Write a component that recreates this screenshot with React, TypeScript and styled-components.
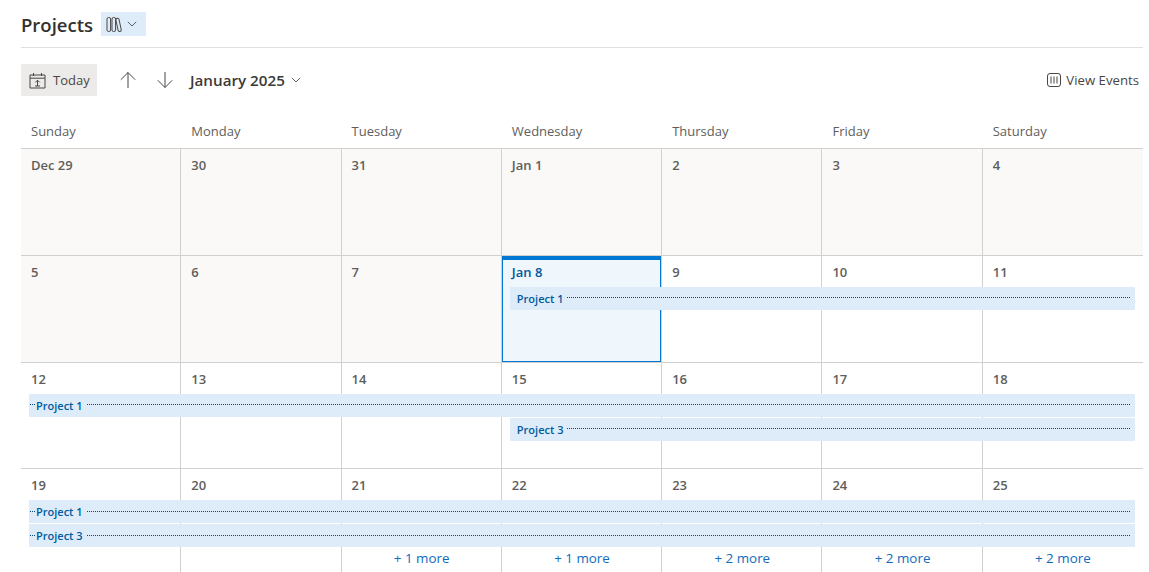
import React from "react";
import styled, { createGlobalStyle } from "styled-components";

const GlobalStyle = createGlobalStyle`
  html, body { margin: 0; padding: 0; background: #fff; overflow: hidden; }
  body { font-family: "Open Sans", "Noto Sans", sans-serif; color: #323130; }
`;

const Page = styled.div`
  width: 1149px;
  height: 572px;
  padding: 0 6px 0 21px;
  box-sizing: border-box;
  overflow: hidden;
`;

const TitleBar = styled.header`
  display: flex;
  align-items: center;
  gap: 8px;
  height: 48px;
  padding-top: 1px;
  box-sizing: border-box;
  border-bottom: 1px solid #e1dfdd;
`;

const Title = styled.h1`
  margin: 1px 0 0;
  font-size: 18.5px;
  font-weight: 600;
  line-height: 24px;
  color: #323130;
`;

const ViewChip = styled.button`
  display: flex;
  align-items: center;
  gap: 4px;
  width: 45px;
  height: 24px;
  padding: 0 0 0 5px;
  box-sizing: border-box;
  border: 0;
  background: #deecf9;
  color: #323130;
`;

const Toolbar = styled.div`
  display: flex;
  align-items: center;
  height: 32px;
  margin-top: 16px;
`;

const TodayButton = styled.button`
  display: flex;
  align-items: center;
  gap: 7px;
  width: 76px;
  height: 32px;
  padding: 0 0 0 8px;
  box-sizing: border-box;
  border: 0;
  background: #edebe9;
  color: #484644;
  font: inherit;
  font-size: 13px;
`;

const ArrowButton = styled.button<{ $gap: number }>`
  display: flex;
  align-items: center;
  justify-content: center;
  width: 20px;
  height: 32px;
  padding: 0;
  margin-left: ${(p) => p.$gap}px;
  border: 0;
  background: none;
  color: #484644;
`;

const MonthLabel = styled.div`
  display: flex;
  align-items: center;
  gap: 6px;
  margin-left: 15px;
  font-size: 15.2px;
  font-weight: 600;
  color: #3b3a39;
`;

const ViewEvents = styled.div`
  display: flex;
  align-items: center;
  gap: 5px;
  margin-left: auto;
  margin-right: 4px;
  font-size: 13.2px;
  color: #484644;
`;

const WeekdayRow = styled.div`
  display: grid;
  grid-template-columns: repeat(7, 1fr);
  height: 49px;
  margin-top: 3px;
  border-bottom: 1px solid #d2d0ce;
  box-sizing: content-box;
`;

const Weekday = styled.div`
  padding: 23px 0 0 10px;
  font-size: 13px;
  line-height: 18px;
  color: #605e5c;
`;

const Week = styled.div<{ $last?: boolean }>`
  display: grid;
  grid-template-columns: repeat(7, 1fr);
  grid-template-rows: 31px 24px 24px 1fr;
  height: ${(p) => (p.$last ? "120px" : "106.8px")};
  box-sizing: border-box;
  border-bottom: ${(p) => (p.$last ? "0" : "1px solid #d2d0ce")};
`;

const DayCell = styled.div<{ $col: number; $past?: boolean; $today?: boolean }>`
  grid-column: ${(p) => p.$col};
  grid-row: 1 / -1;
  box-sizing: border-box;
  padding: 7px 0 0 10px;
  border-right: ${(p) => (p.$col < 7 ? "1px solid #d2d0ce" : "0")};
  background: ${(p) => (p.$past ? "#faf9f8" : "#fff")};
  color: #605e5c;
  font-size: 13px;
  font-weight: 600;
  line-height: 18px;
  ${(p) =>
    p.$today &&
    `
    margin-right: 1px;
    padding: 3px 0 0 9px;
    border: 1px solid #0078d4;
    border-top: 4px solid #0078d4;
    background: #eff6fc;
    color: #005a9e;
    box-shadow: 1px 0 0 #d2d0ce;
  `}
`;

const Bar = styled.div<{ $from: number; $row: number }>`
  grid-column: ${(p) => p.$from} / -1;
  grid-row: ${(p) => p.$row};
  z-index: 1;
  display: flex;
  align-items: center;
  height: 23px;
  margin: 0 8px;
  padding: 0 5px 0 7px;
  background: #deecf9;
  color: #005a9e;
  font-size: 11px;
  font-weight: 600;
  border-radius: 1px;
`;

const Dots = styled.span<{ $lead?: boolean }>`
  flex: ${(p) => (p.$lead ? "0 0 5px" : "1")};
  height: 0;
  margin: ${(p) => (p.$lead ? "-1px 1px 0 -6px" : "-1px 0 0 4px")};
  border-top: 1px dotted #004c87;
`;

const BarName = styled.span`
  white-space: nowrap;
`;

const MoreLink = styled.div<{ $col: number }>`
  grid-column: ${(p) => p.$col};
  grid-row: 4;
  z-index: 1;
  padding-top: 1px;
  text-align: center;
  color: #0f6cbd;
  font-size: 13.4px;
  line-height: 18px;
`;

const Chevron = () => (
  <svg width="10" height="6" viewBox="0 0 10 6" fill="none" stroke="#605e5c" strokeWidth="1">
    <path d="M.8.8 5 5l4.2-4.2" />
  </svg>
);

const BooksIcon = () => (
  <svg width="17" height="17" viewBox="0 0 17 17" fill="none" stroke="#484644" strokeWidth="1">
    <rect x="1" y="1.5" width="3.6" height="14" rx="1.5" />
    <rect x="6" y="1.5" width="3.6" height="14" rx="1.5" />
    <rect x="11" y="2.2" width="3.2" height="13.4" rx="1.6" transform="rotate(-12 12.6 9)" />
  </svg>
);

const TodayIcon = () => (
  <svg width="17" height="17" viewBox="0 0 17 17" fill="none" stroke="#484644" strokeWidth="1">
    <path d="M1 3h15v13H1zM1 6.2h15M4.5 1v3M12.5 1v3" />
    <path d="M8.5 14V8.4M6.3 10.4l2.2-2.2 2.2 2.2M6 14h5" />
  </svg>
);

const ArrowUp = () => (
  <svg width="18" height="18" viewBox="0 0 18 18" fill="none" stroke="currentColor" strokeWidth="1">
    <path d="M9 17V1.5M1.8 8.7 9 1.5l7.2 7.2" />
  </svg>
);

const ArrowDown = () => (
  <svg width="18" height="18" viewBox="0 0 18 18" fill="none" stroke="currentColor" strokeWidth="1">
    <path d="M9 1v15.5M1.8 9.3 9 16.5l7.2-7.2" />
  </svg>
);

const ColumnsIcon = () => (
  <svg width="14" height="14" viewBox="0 0 14 14" fill="none" stroke="#484644" strokeWidth="1">
    <rect x=".5" y=".5" width="13" height="13" rx="2.5" />
    <path d="M4 3.5v7M7 3.5v7M10 3.5v7" />
  </svg>
);

const weekdays = ["Sunday", "Monday", "Tuesday", "Wednesday", "Thursday", "Friday", "Saturday"];

type BarData = { name: string; from: number; row: number; lead?: boolean };
type WeekData = { days: string[]; past: number; today?: number; bars: BarData[]; more?: string[] };

const weeks: WeekData[] = [
  { days: ["Dec 29", "30", "31", "Jan 1", "2", "3", "4"], past: 7, bars: [] },
  {
    days: ["5", "6", "7", "Jan 8", "9", "10", "11"],
    past: 3,
    today: 4,
    bars: [{ name: "Project 1", from: 4, row: 2 }],
  },
  {
    days: ["12", "13", "14", "15", "16", "17", "18"],
    past: 0,
    bars: [
      { name: "Project 1", from: 1, row: 2, lead: true },
      { name: "Project 3", from: 4, row: 3 },
    ],
  },
  {
    days: ["19", "20", "21", "22", "23", "24", "25"],
    past: 0,
    bars: [
      { name: "Project 1", from: 1, row: 2, lead: true },
      { name: "Project 3", from: 1, row: 3, lead: true },
    ],
    more: ["", "", "+ 1 more", "+ 1 more", "+ 2 more", "+ 2 more", "+ 2 more"],
  },
];

export default function App() {
  return (
    <Page>
      <GlobalStyle />
      <TitleBar>
        <Title>Projects</Title>
        <ViewChip>
          <BooksIcon />
          <Chevron />
        </ViewChip>
      </TitleBar>
      <Toolbar>
        <TodayButton>
          <TodayIcon />
          Today
        </TodayButton>
        <ArrowButton $gap={21}>
          <ArrowUp />
        </ArrowButton>
        <ArrowButton $gap={17}>
          <ArrowDown />
        </ArrowButton>
        <MonthLabel>
          January 2025
          <Chevron />
        </MonthLabel>
        <ViewEvents>
          <ColumnsIcon />
          View Events
        </ViewEvents>
      </Toolbar>
      <WeekdayRow>
        {weekdays.map((d) => (
          <Weekday key={d}>{d}</Weekday>
        ))}
      </WeekdayRow>
      {weeks.map((w, n) => (
        <Week key={w.days[0]} $last={n === weeks.length - 1}>
          {w.days.map((d, i) => (
            <DayCell key={d} $col={i + 1} $past={i < w.past} $today={w.today === i + 1}>
              {d}
            </DayCell>
          ))}
          {w.bars.map((b) => (
            <Bar key={b.name} $from={b.from} $row={b.row}>
              {b.lead && <Dots $lead />}
              <BarName>{b.name}</BarName>
              <Dots />
            </Bar>
          ))}
          {w.more?.map(
            (m, i) =>
              m && (
                <MoreLink key={i} $col={i + 1}>
                  {m}
                </MoreLink>
              ),
          )}
        </Week>
      ))}
    </Page>
  );
}
